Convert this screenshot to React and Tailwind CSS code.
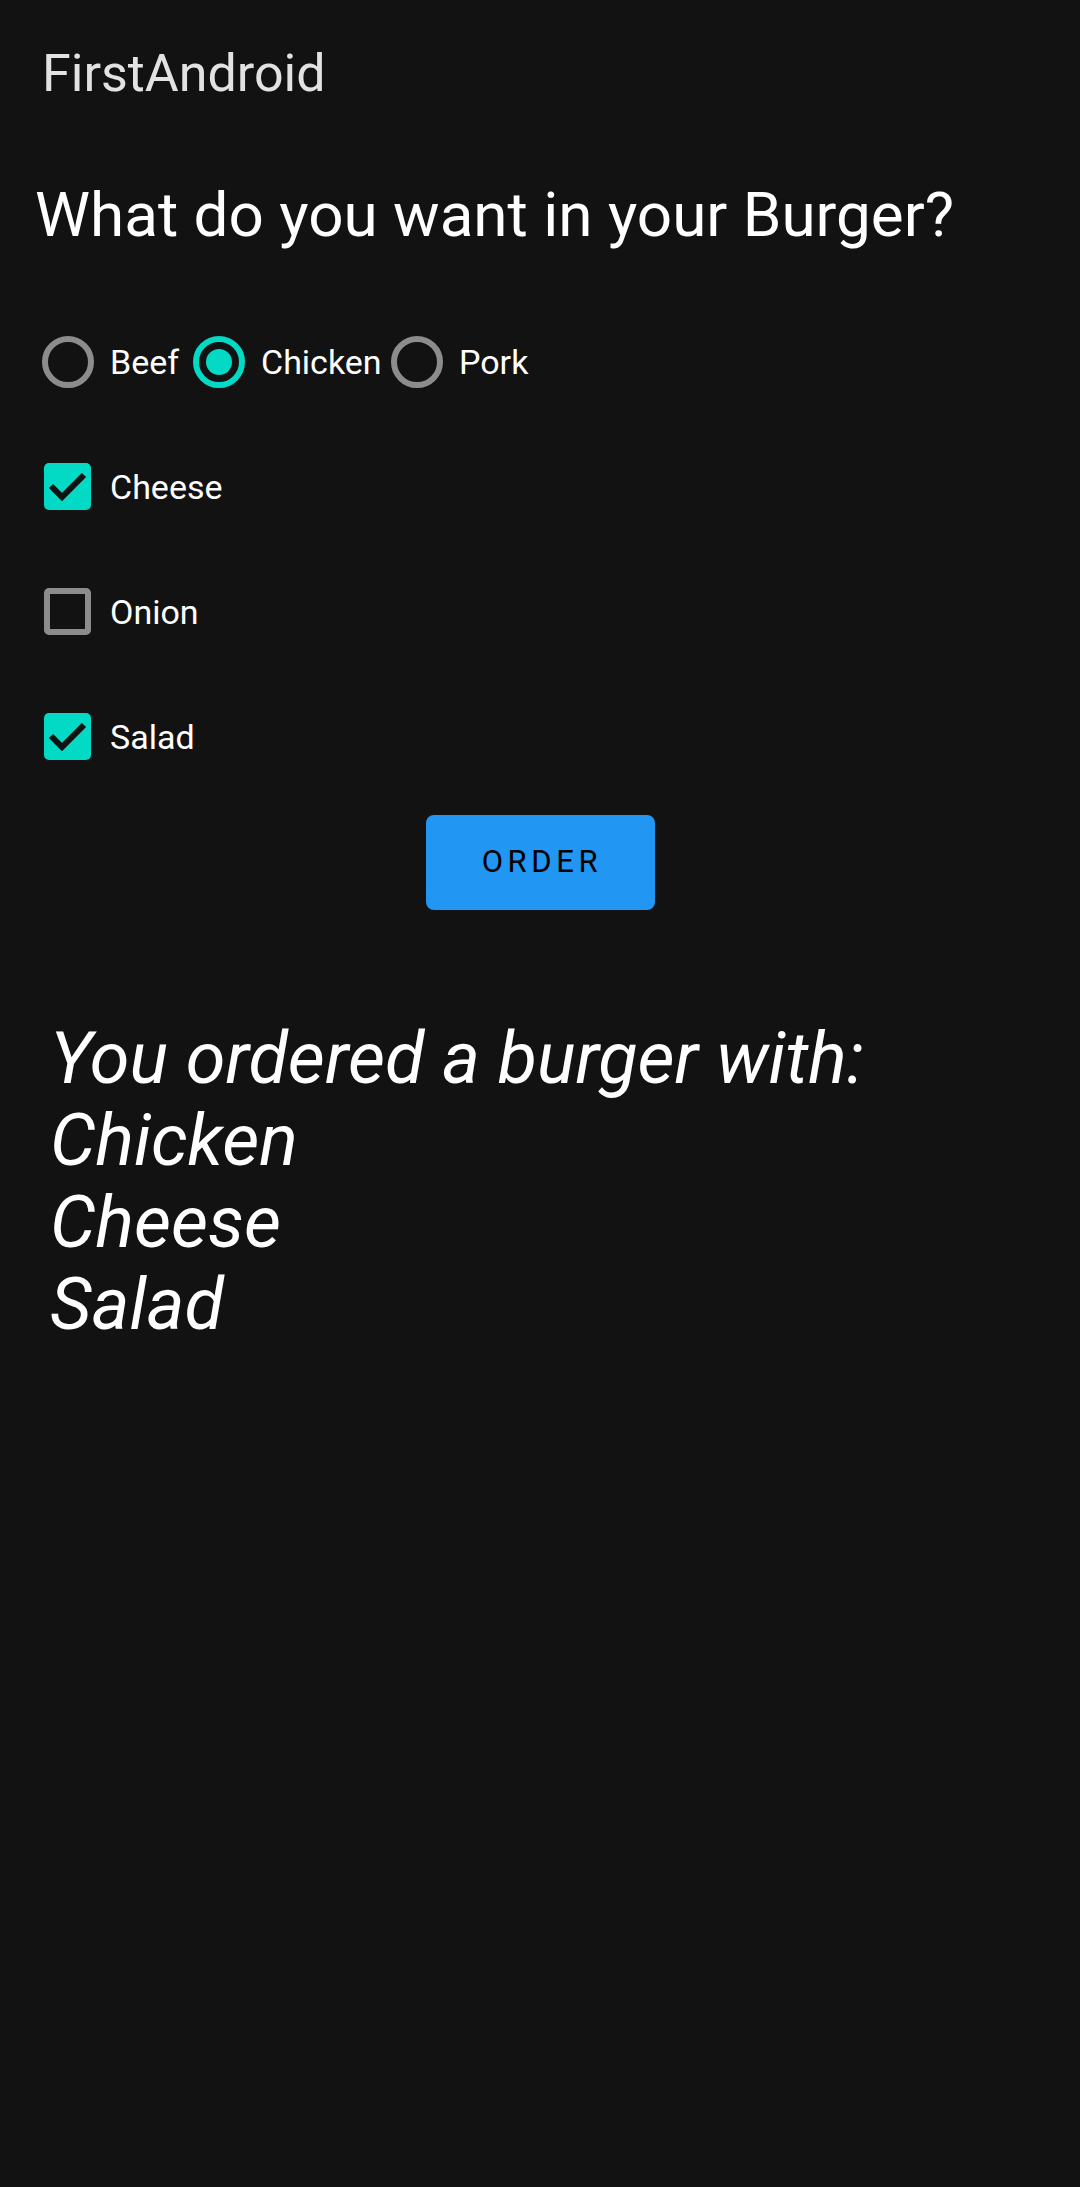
import React from "react";

const font = { fontFamily: 'Roboto, "Noto Sans", sans-serif' };

function Radio({ checked, label, w }) {
  return (
    <div className="flex items-center" style={{ width: w }}>
      <div
        className={
          "flex h-[52px] w-[52px] shrink-0 items-center justify-center rounded-full border-[6px] " +
          (checked ? "border-[#03dac5]" : "border-[#8c8c8c]")
        }
      >
        {checked && <div className="h-[26px] w-[26px] rounded-full bg-[#03dac5]" />}
      </div>
      <span className="ml-[16px] text-[34px] leading-none text-white">{label}</span>
    </div>
  );
}

function Check({ checked, label }) {
  return (
    <div className="flex h-[125px] items-center pl-[44px]">
      {checked ? (
        <div className="flex h-[47px] w-[47px] items-center justify-center rounded-[5px] bg-[#03dac5]">
          <svg width="47" height="47" viewBox="0 0 47 47">
            <path d="M7 23 L18 34 L40 12" fill="none" stroke="#121212" strokeWidth="6" strokeLinecap="butt" strokeLinejoin="miter" />
          </svg>
        </div>
      ) : (
        <div className="h-[47px] w-[47px] rounded-[5px] border-[6px] border-[#8c8c8c]" />
      )}
      <span className="ml-[19px] text-[34px] leading-none text-white">{label}</span>
    </div>
  );
}

export default function App() {
  return (
    <div className="min-h-[2187px] w-full bg-[#121212]" style={font}>
      <div className="flex h-[147px] items-center pl-[42px]">
        <span className="text-[52px] leading-none text-[#e2e2e2]">FirstAndroid</span>
      </div>
      <div className="mt-[31px] pl-[35px] text-[62px] leading-[74px] text-white">
        What do you want in your Burger?
      </div>
      <div className="mt-[47px] flex h-[125px] items-center pl-[42px]">
        <Radio label="Beef" w={151} />
        <Radio label="Chicken" checked w={198} />
        <Radio label="Pork" w={150} />
      </div>
      <Check label="Cheese" checked />
      <Check label="Onion" />
      <Check label="Salad" checked />
      <div className="mt-[16px] flex justify-center">
        <div className="flex h-[95px] w-[229px] items-center justify-center rounded-[8px] bg-[#2196f3] pl-[4px] text-[31px] tracking-[0.15em] text-black">
          ORDER
        </div>
      </div>
      <div className="mt-[108px] pl-[50px] text-[72px] italic leading-[82px] text-white">
        <div>You ordered a burger with:</div>
        <div>Chicken</div>
        <div>Cheese</div>
        <div>Salad</div>
      </div>
    </div>
  );
}
